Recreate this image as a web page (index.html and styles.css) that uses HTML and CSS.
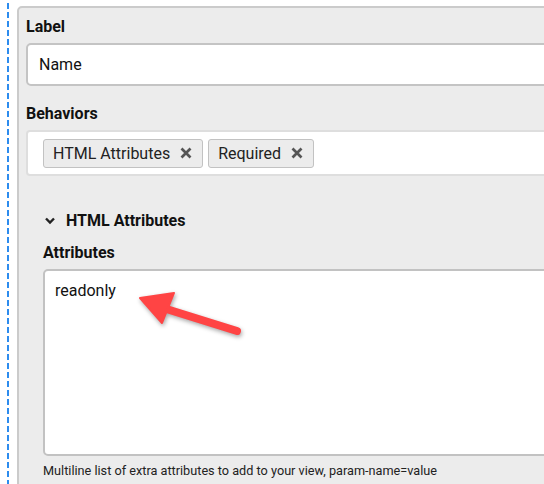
FILE: index.html
```html
<!DOCTYPE html>
<html>
    <head>
        <meta charset="UTF-8">
        <title>Field settings</title>
        <link rel="stylesheet" href="styles.css">
    </head>

    <body>
        <div class="canvas">
            <div class="guide"></div>

            <div class="panel">
                <div class="form-group">
                    <label class="form-label">Label</label>
                    <div class="text-input">Name</div>
                </div>

                <div class="form-group">
                    <label class="form-label">Behaviors</label>
                    <div class="tag-box">
                        <span class="tag">HTML Attributes
                            <svg class="tag-x" viewBox="0 0 12 12"><path d="M1.5 1.5L10.5 10.5M10.5 1.5L1.5 10.5"/></svg>
                        </span>
                        <span class="tag">Required
                            <svg class="tag-x" viewBox="0 0 12 12"><path d="M1.5 1.5L10.5 10.5M10.5 1.5L1.5 10.5"/></svg>
                        </span>
                    </div>
                </div>

                <div class="section">
                    <div class="section-title">
                        <svg class="chevron" viewBox="0 0 12 8"><path d="M2 1.5L6 5.5L10 1.5"/></svg>
                        HTML Attributes
                    </div>

                    <label class="form-label">Attributes</label>
                    <div class="textarea">readonly</div>
                    <p class="help">Multiline list of extra attributes to add to your view, param-name=value</p>
                </div>
            </div>
        </div>

        <svg class="arrow" width="544" height="484" viewBox="0 0 544 484">
            <line x1="160" y1="307" x2="237" y2="331" />
            <polygon points="140,298 174,293 162,323" />
        </svg>
    </body>
</html>
```

FILE: styles.css
```css
* {
    margin: 0;
    padding: 0;
    box-sizing: border-box;
}

html, body {
    overflow: hidden;
}

body {
    background: white;
    font-family: Roboto, 'Liberation Sans', sans-serif;
    color: #111;
    width: 544px;
    height: 484px;
    position: relative;
}

.canvas {
    display: flex;
    min-height: 484px;
}

.guide {
    width: 2px;
    margin-left: 7px;
    flex-shrink: 0;
    background: repeating-linear-gradient(to bottom, transparent 0, transparent 3px, #2d8cee 3px, #2d8cee 9px);
}

.panel {
    margin-left: 8px;
    margin-top: 6px;
    width: 640px;
    height: 540px;
    flex-shrink: 0;
    background: #ececec;
    border: 2px solid #cbcbcb;
    border-radius: 5px;
    padding: 9px 7px 0 7px;
}

.form-group {
    margin-bottom: 18px;
}

.form-label {
    display: block;
    font-size: 16px;
    font-weight: bold;
    line-height: 19px;
    margin-bottom: 7px;
}

.text-input {
    height: 43px;
    background: white;
    border: 2px solid #c4c4c4;
    border-radius: 5px;
    padding: 0 11px;
    font-size: 16px;
    line-height: 39px;
    color: #111;
}

.tag-box {
    display: flex;
    align-items: center;
    gap: 5px;
    height: 46px;
    background: white;
    border: 2px solid #dedede;
    border-radius: 4px;
    padding: 0 15px;
    margin-top: 7px;
}

.tag {
    display: flex;
    align-items: center;
    gap: 10px;
    height: 29px;
    padding: 0 10px 0 9px;
    background: #ececec;
    border: 1px solid #c2c2c2;
    border-radius: 3px;
    font-size: 16px;
    color: #222;
}

.tag-x {
    width: 12px;
    height: 12px;
    fill: none;
    stroke: #555;
    stroke-width: 2.7;
}

.section {
    padding: 17px 0 0 17px;
}

.section-title {
    display: flex;
    align-items: center;
    gap: 10px;
    font-size: 16px;
    font-weight: bold;
    line-height: 19px;
    margin-bottom: 13px;
    padding-left: 1px;
}

.chevron {
    width: 12px;
    height: 8px;
    fill: none;
    stroke: #222;
    stroke-width: 2.4;
}

.textarea {
    height: 187px;
    background: white;
    border: 2px solid #c2c2c2;
    border-radius: 5px;
    padding: 10px 10px;
    font-size: 16px;
    line-height: 19px;
}

.help {
    margin-top: 7px;
    font-size: 12.7px;
    line-height: 15px;
    color: #222;
}

.arrow {
    position: absolute;
    left: 0;
    top: 0;
    pointer-events: none;
    filter: drop-shadow(1px 2px 2px rgba(0, 0, 0, 0.35));
}

.arrow line {
    stroke: #ff4444;
    stroke-width: 8;
    stroke-linecap: round;
}

.arrow polygon {
    fill: #ff4444;
    stroke: #ff4444;
    stroke-width: 2;
    stroke-linejoin: round;
}
```
